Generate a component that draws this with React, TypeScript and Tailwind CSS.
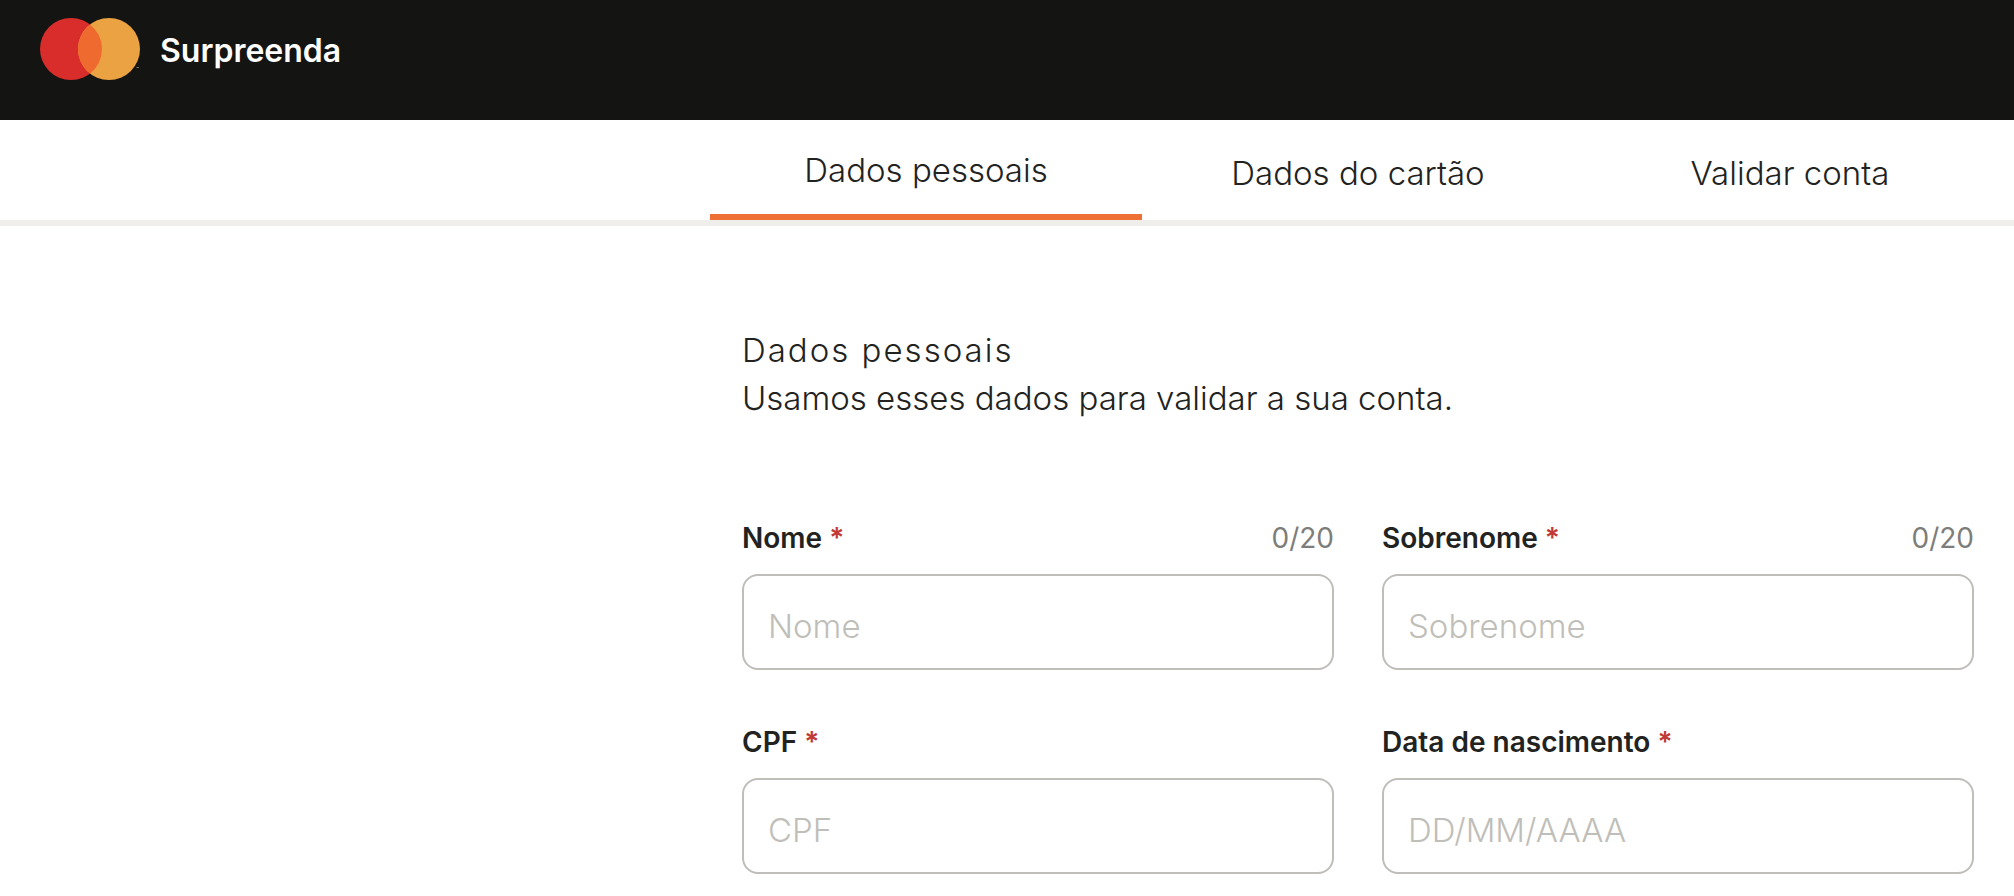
import React, { useState } from 'react';

interface FieldProps {
    id: string;
    label: string;
    placeholder: string;
    maxLength?: number;
    showCounter?: boolean;
}

const tabs = ['Dados pessoais', 'Dados do cartão', 'Validar conta'];

const Logo: React.FC = () => (
    <svg className="h-16 w-[100px]" viewBox="0 0 100 64" aria-hidden="true">
        <circle cx="31" cy="32" r="31" fill="#d92d2b" />
        <circle cx="69" cy="32" r="31" fill="#eaa242" />
        <path d="M50 7.5a31 31 0 0 1 0 49a31 31 0 0 1 0-49z" fill="#ef6a2e" />
        <path d="M96.5 50.5h2.5" stroke="#77736a" strokeWidth="1" />
    </svg>
);

const Field: React.FC<FieldProps> = ({ id, label, placeholder, maxLength, showCounter }) => {
    const [value, setValue] = useState('');

    return (
        <div>
            <div className="flex h-10 items-center justify-between text-[28px] leading-10">
                <label htmlFor={id} className="font-semibold">
                    {label} <span className="text-[#c13a35]">*</span>
                </label>
                {showCounter && (
                    <span className="text-[#7d7d7a]">
                        {value.length}/{maxLength}
                    </span>
                )}
            </div>
            <input
                id={id}
                type="text"
                value={value}
                maxLength={maxLength}
                placeholder={placeholder}
                onChange={(e) => setValue(e.target.value)}
                className="mt-4 block h-24 w-full rounded-2xl border-2 border-[#bfbeb9] bg-white px-6 pt-2 text-[33px] font-light placeholder:text-[#bfbeb9]"
            />
        </div>
    );
};

const App: React.FC = () => {
    const [active, setActive] = useState(0);

    return (
        <div className="min-h-screen bg-white font-['Inter',sans-serif] text-[#222321]">
            <header className="flex h-[120px] items-start bg-[#141412] px-10 pt-[17px]">
                <a href="#" className="flex items-center gap-5 text-white">
                    <Logo />
                    <span className="pt-1 text-[32px] font-semibold">Surpreenda</span>
                </a>
            </header>

            <nav className="border-b-[6px] border-[#efeeea]">
                <div className="mr-2 ml-auto grid h-[100px] max-w-[1296px] grid-cols-3 text-[33px] font-light">
                    {tabs.map((tab, index) => (
                        <button
                            key={tab}
                            type="button"
                            onClick={() => setActive(index)}
                            className={index === active ? 'border-b-[6px] border-[#ee7034] pt-2' : 'pt-2'}
                        >
                            {tab}
                        </button>
                    ))}
                </div>
            </nav>

            <main className="mr-2 ml-auto max-w-[1296px] px-8 pt-[100px]">
                <h1 className="text-[33px] leading-[48px] font-light tracking-[2px]">Dados pessoais</h1>
                <p className="text-[33px] leading-[48px] font-light">Usamos esses dados para validar a sua conta.</p>

                <form className="mt-24 grid grid-cols-2 gap-x-12 gap-y-[52px]">
                    <Field id="nome" label="Nome" placeholder="Nome" maxLength={20} showCounter />
                    <Field id="sobrenome" label="Sobrenome" placeholder="Sobrenome" maxLength={20} showCounter />
                    <Field id="cpf" label="CPF" placeholder="CPF" />
                    <Field id="nascimento" label="Data de nascimento" placeholder="DD/MM/AAAA" />
                </form>
            </main>
        </div>
    );
};

export default App;
